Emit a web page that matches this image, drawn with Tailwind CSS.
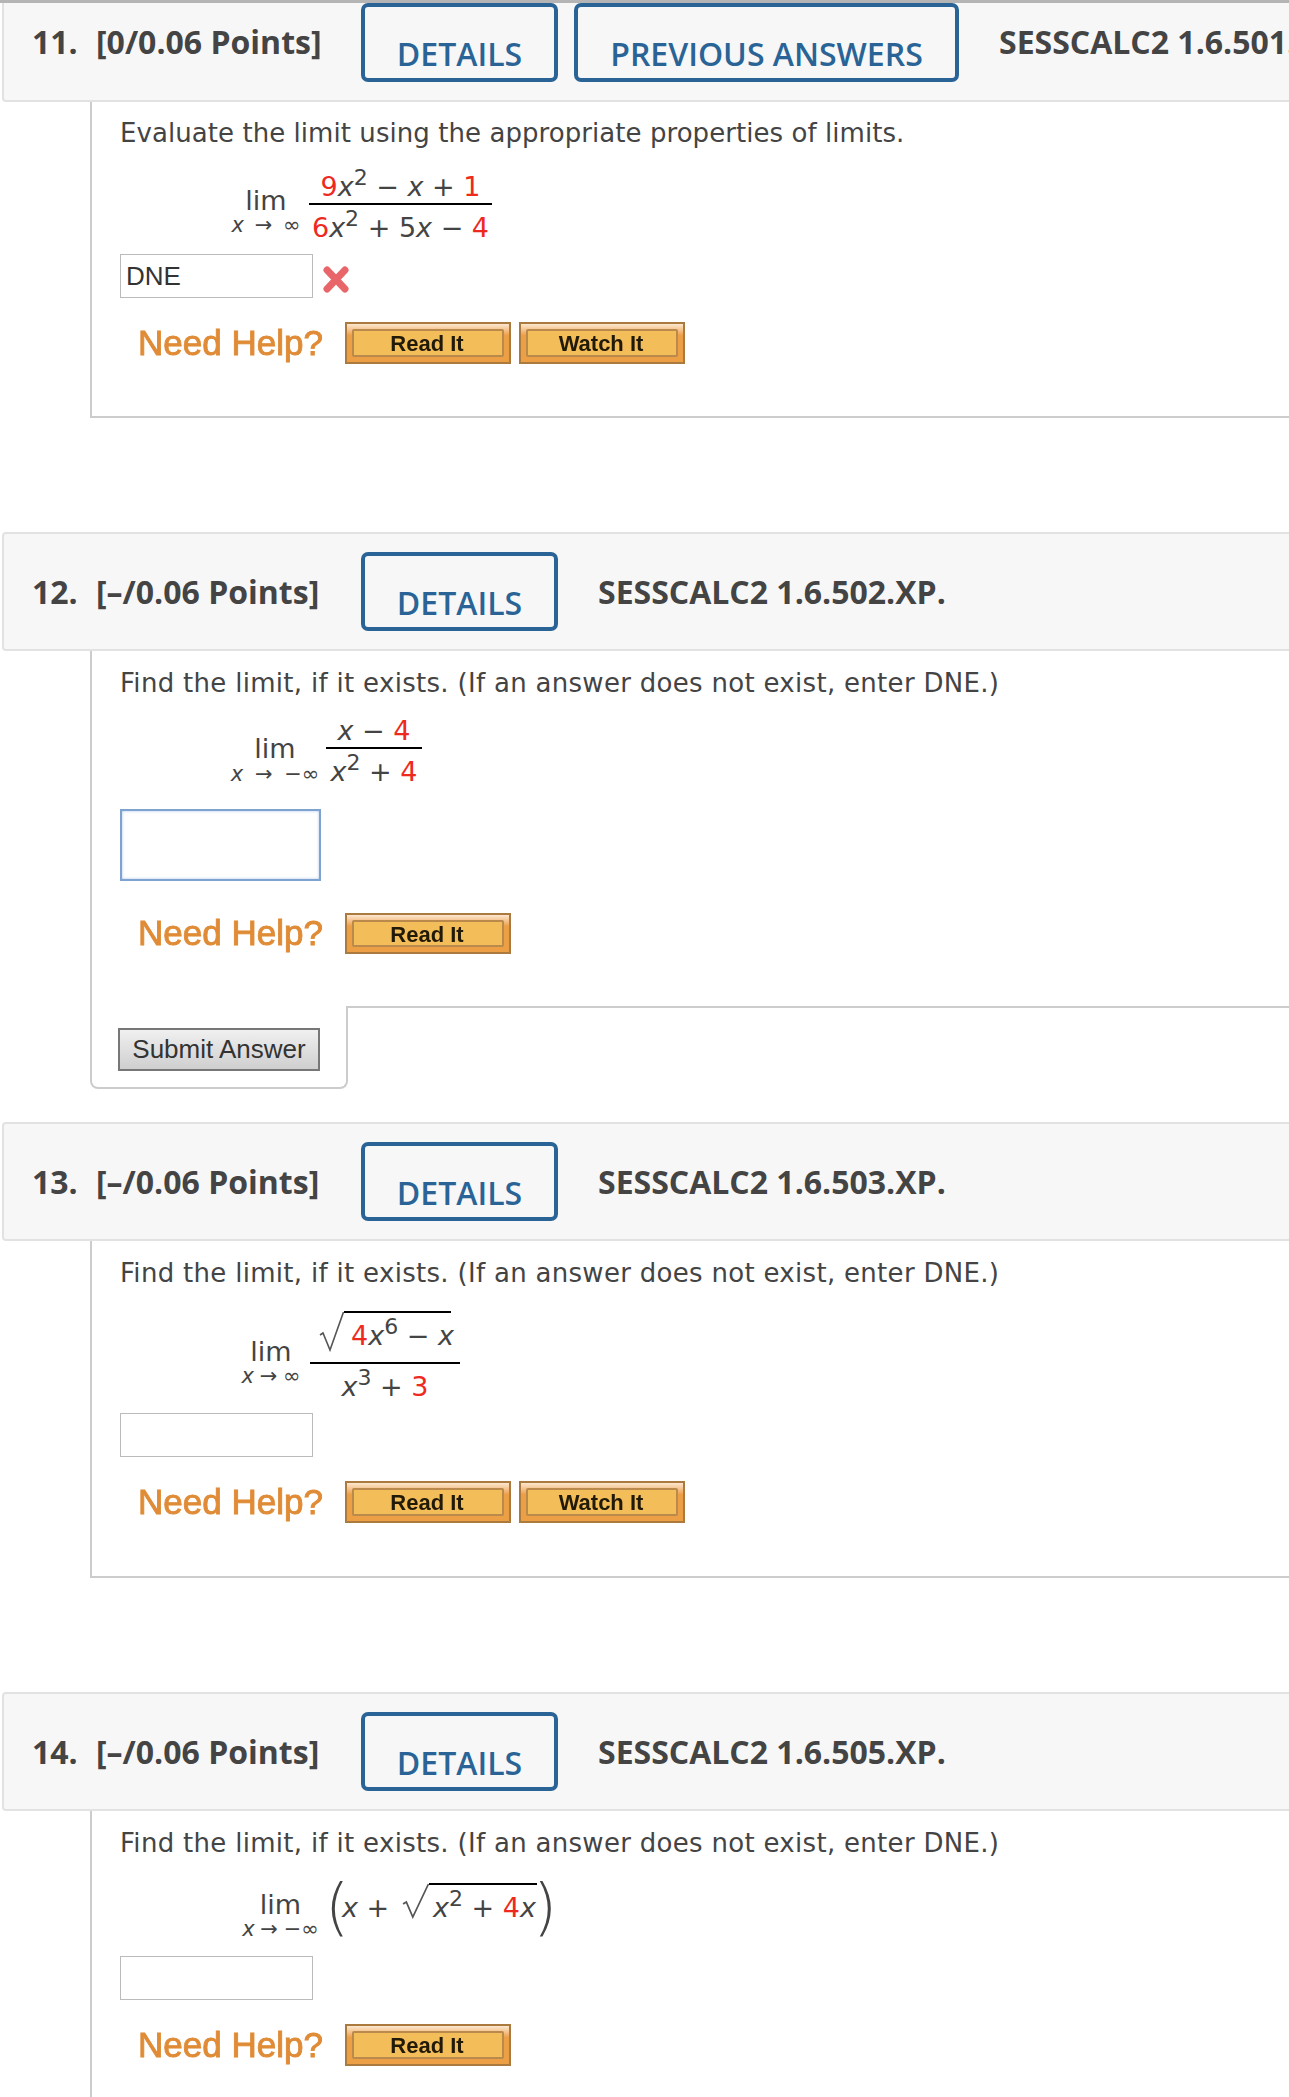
<!DOCTYPE html>
<html lang="en">
<head>
  <meta charset="UTF-8">
  <title>Limits homework</title>
  <script src="https://cdn.jsdelivr.net/npm/@tailwindcss/browser@4"></script>
</head>
<body class="bg-white overflow-hidden font-['DejaVu_Sans',sans-serif] text-[#444]">
<div class="w-[1289px] h-[2097px] overflow-hidden border-t-[3px] border-[#b5b5b5]">

  <!-- Question 11 -->
  <div class="h-[99px] ml-[2px] w-[1400px] border-2 border-t-0 border-[#e2e2e2] rounded-bl-[4px] bg-[#f7f7f7] flex items-center pb-[19px] font-['Open_Sans',sans-serif] font-bold text-[#444]">
    <span class="w-[64px] ml-[28px] text-[32px] leading-none">11.</span>
    <span class="w-[265px] text-[32px] leading-none whitespace-nowrap">[0/0.06 Points]</span>
    <span class="h-[79px] w-[197px] shrink-0 border-4 border-[#2a6496] rounded-[7px] flex justify-center pt-[27px] text-[32px] leading-[40px] font-semibold text-[#2a6496]">DETAILS</span>
    <span class="h-[79px] w-[385px] shrink-0 ml-[16px] border-4 border-[#2a6496] rounded-[7px] flex justify-center pt-[27px] text-[32px] leading-[40px] font-semibold text-[#2a6496]">PREVIOUS ANSWERS</span>
    <span class="ml-[40px] text-[32px] leading-none whitespace-nowrap">SESSCALC2 1.6.501.XP.</span>
  </div>
  <div class="h-[316px] ml-[90px] border-l-2 border-b-2 border-[#ccc] pl-[28px] pt-[15px]">
    <p class="text-[26px] tracking-[0.06px] leading-[32px] whitespace-nowrap">Evaluate the limit using the appropriate properties of limits.</p>
    <div class="flex items-start h-[87px] mt-[18px] ml-[111px] text-[27px]">
      <div class="w-[70px] mt-[22px] flex flex-col items-center">
        <span class="leading-[24px]">lim</span>
        <span class="text-[21px] leading-[24px] whitespace-nowrap [word-spacing:4px]"><i>x</i> → ∞</span>
      </div>
      <div class="w-[183px] ml-[8px] flex flex-col items-center whitespace-nowrap">
        <div class="w-full h-[38px] pt-[4px] text-center leading-[32px] border-b-2 border-black"><span class="text-[#ee2a1f]">9</span><i>x</i><sup class="text-[22px]">2</sup> − <i>x</i> + <span class="text-[#ee2a1f]">1</span></div>
        <div class="pt-[5px] leading-[36px]"><span class="text-[#ee2a1f]">6</span><i>x</i><sup class="text-[22px]">2</sup> + 5<i>x</i> − <span class="text-[#ee2a1f]">4</span></div>
      </div>
    </div>
    <div class="flex items-center">
      <div class="w-[193px] h-[44px] border border-[#bbb] pl-[5px] flex items-center font-['Liberation_Sans',sans-serif] text-[26px] text-[#333]">DNE</div>
      <svg class="ml-[9px] mt-[6px]" width="28" height="29" viewBox="0 0 28 29"><path d="M5 5 L23 24 M23 5 L5 24" stroke="#e8666a" stroke-width="7" stroke-linecap="round"/></svg>
    </div>
    <div class="flex items-center mt-[24px] ml-[18px] font-['Liberation_Sans',sans-serif]">
      <span class="w-[207px] pb-[2px] text-[35px] leading-none text-[#e08b36] [-webkit-text-stroke:0.9px_#e08b36] blur-[0.4px] whitespace-nowrap">Need Help?</span>
      <div class="w-[166px] h-[42px] border-2 border-[#ab7a3f] bg-gradient-to-b from-[#fbe7cf] to-[#ed9f45] to-30% p-[5px] flex">
        <div class="grow border-2 border-[#b98a4b] rounded-[2px] bg-[#f3bd5a] flex items-center justify-center pt-[1px] pr-[2px] text-[22px] font-bold text-[#221a08] blur-[0.4px]">Read It</div>
      </div>
      <div class="ml-[8px] w-[166px] h-[42px] border-2 border-[#ab7a3f] bg-gradient-to-b from-[#fbe7cf] to-[#ed9f45] to-30% p-[5px] flex">
        <div class="grow border-2 border-[#b98a4b] rounded-[2px] bg-[#f3bd5a] flex items-center justify-center pt-[1px] pr-[2px] text-[22px] font-bold text-[#221a08] blur-[0.4px]">Watch It</div>
      </div>
    </div>
  </div>

  <!-- Question 12 -->
  <div class="h-[119px] mt-[114px] ml-[2px] w-[1400px] border-2 border-[#e2e2e2] rounded-l-[4px] bg-[#f7f7f7] flex items-center font-['Open_Sans',sans-serif] font-bold">
    <span class="w-[64px] ml-[28px] text-[32px] leading-none">12.</span>
    <span class="w-[265px] text-[32px] leading-none whitespace-nowrap">[–/0.06 Points]</span>
    <span class="h-[79px] w-[197px] shrink-0 border-4 border-[#2a6496] rounded-[7px] flex justify-center pt-[27px] text-[32px] leading-[40px] font-semibold text-[#2a6496]">DETAILS</span>
    <span class="ml-[40px] text-[32px] leading-none whitespace-nowrap">SESSCALC2 1.6.502.XP.</span>
  </div>
  <div class="h-[438px] ml-[90px] flex flex-col">
    <div class="h-[355px] border-l-2 border-[#ccc] pl-[28px] pt-[16px]">
      <p class="text-[26px] tracking-[0.3px] leading-[32px] whitespace-nowrap">Find the limit, if it exists. (If an answer does not exist, enter DNE.)</p>
      <div class="flex items-start h-[98px] mt-[12px] ml-[111px] text-[27px]">
        <div class="w-[88px] mt-[26px] flex flex-col items-center">
          <span class="leading-[24px]">lim</span>
          <span class="text-[21px] leading-[26px] whitespace-nowrap [word-spacing:5px]"><i>x</i> → −∞</span>
        </div>
        <div class="w-[96px] ml-[7px] flex flex-col items-center whitespace-nowrap">
          <div class="w-full h-[38px] pt-[4px] text-center leading-[32px] border-b-2 border-black"><i>x</i> − <span class="text-[#ee2a1f]">4</span></div>
          <div class="pt-[5px] leading-[36px]"><i>x</i><sup class="text-[22px]">2</sup> + <span class="text-[#ee2a1f]">4</span></div>
        </div>
      </div>
      <div class="w-[201px] h-[72px] border-2 border-[#7fa3d1] shadow-[inset_0_0_3px_#a9c4e6]"></div>
      <div class="flex items-center mt-[32px] ml-[18px] font-['Liberation_Sans',sans-serif]">
        <span class="w-[207px] pb-[2px] text-[35px] leading-none text-[#e08b36] [-webkit-text-stroke:0.9px_#e08b36] blur-[0.4px] whitespace-nowrap">Need Help?</span>
        <div class="w-[166px] h-[41px] border-2 border-[#ab7a3f] bg-gradient-to-b from-[#fbe7cf] to-[#ed9f45] to-30% p-[5px] flex">
          <div class="grow border-2 border-[#b98a4b] rounded-[2px] bg-[#f3bd5a] flex items-center justify-center pt-[1px] pr-[2px] text-[22px] font-bold text-[#221a08] blur-[0.4px]">Read It</div>
        </div>
      </div>
    </div>
    <div class="flex h-[83px]">
      <div class="w-[258px] border-2 border-t-0 border-[#ccc] rounded-b-[8px] pt-[22px] pl-[26px]">
        <div class="w-[202px] h-[43px] border-2 border-[#777] bg-gradient-to-b from-[#f0f0f0] to-[#cfcfcf] flex items-center justify-center font-['Liberation_Sans',sans-serif] text-[26px] text-[#333]">Submit Answer</div>
      </div>
      <div class="grow border-t-2 border-[#ccc] ml-[-2px]"></div>
    </div>
  </div>

  <!-- Question 13 -->
  <div class="h-[119px] mt-[33px] ml-[2px] w-[1400px] border-2 border-[#e2e2e2] rounded-l-[4px] bg-[#f7f7f7] flex items-center font-['Open_Sans',sans-serif] font-bold">
    <span class="w-[64px] ml-[28px] text-[32px] leading-none">13.</span>
    <span class="w-[265px] text-[32px] leading-none whitespace-nowrap">[–/0.06 Points]</span>
    <span class="h-[79px] w-[197px] shrink-0 border-4 border-[#2a6496] rounded-[7px] flex justify-center pt-[27px] text-[32px] leading-[40px] font-semibold text-[#2a6496]">DETAILS</span>
    <span class="ml-[40px] text-[32px] leading-none whitespace-nowrap">SESSCALC2 1.6.503.XP.</span>
  </div>
  <div class="h-[337px] ml-[90px] border-l-2 border-b-2 border-[#ccc] pl-[28px] pt-[16px]">
    <p class="text-[26px] tracking-[0.3px] leading-[32px] whitespace-nowrap">Find the limit, if it exists. (If an answer does not exist, enter DNE.)</p>
    <div class="flex items-start h-[102px] mt-[22px] ml-[120px] text-[27px]">
      <div class="w-[62px] mt-[29px] flex flex-col items-center">
        <span class="leading-[24px]">lim</span>
        <span class="text-[21px] leading-[24px] whitespace-nowrap [word-spacing:-1px]"><i>x</i> → ∞</span>
      </div>
      <div class="w-[150px] ml-[8px] flex flex-col items-center whitespace-nowrap">
        <div class="w-full h-[53px] flex justify-center items-start border-b-2 border-black">
          <svg width="25" height="41" viewBox="0 0 25 41"><path d="M1 24 L4 22 L11 39 L24.5 1" fill="none" stroke="#555" stroke-width="1.6"/></svg>
          <div class="w-[107px] pl-[7px] pt-[3px] leading-[40px] border-t-2 border-black"><span class="text-[#ee2a1f]">4</span><i>x</i><sup class="text-[22px]">6</sup> − <i>x</i></div>
        </div>
        <div class="pt-[5px] leading-[36px]"><i>x</i><sup class="text-[22px]">3</sup> + <span class="text-[#ee2a1f]">3</span></div>
      </div>
    </div>
    <div class="w-[193px] h-[44px] border border-[#bbb]"></div>
    <div class="flex items-center mt-[24px] ml-[18px] font-['Liberation_Sans',sans-serif]">
      <span class="w-[207px] pb-[2px] text-[35px] leading-none text-[#e08b36] [-webkit-text-stroke:0.9px_#e08b36] blur-[0.4px] whitespace-nowrap">Need Help?</span>
      <div class="w-[166px] h-[42px] border-2 border-[#ab7a3f] bg-gradient-to-b from-[#fbe7cf] to-[#ed9f45] to-30% p-[5px] flex">
        <div class="grow border-2 border-[#b98a4b] rounded-[2px] bg-[#f3bd5a] flex items-center justify-center pt-[1px] pr-[2px] text-[22px] font-bold text-[#221a08] blur-[0.4px]">Read It</div>
      </div>
      <div class="ml-[8px] w-[166px] h-[42px] border-2 border-[#ab7a3f] bg-gradient-to-b from-[#fbe7cf] to-[#ed9f45] to-30% p-[5px] flex">
        <div class="grow border-2 border-[#b98a4b] rounded-[2px] bg-[#f3bd5a] flex items-center justify-center pt-[1px] pr-[2px] text-[22px] font-bold text-[#221a08] blur-[0.4px]">Watch It</div>
      </div>
    </div>
  </div>

  <!-- Question 14 -->
  <div class="h-[119px] mt-[114px] ml-[2px] w-[1400px] border-2 border-[#e2e2e2] rounded-l-[4px] bg-[#f7f7f7] flex items-center font-['Open_Sans',sans-serif] font-bold">
    <span class="w-[64px] ml-[28px] text-[32px] leading-none">14.</span>
    <span class="w-[265px] text-[32px] leading-none whitespace-nowrap">[–/0.06 Points]</span>
    <span class="h-[79px] w-[197px] shrink-0 border-4 border-[#2a6496] rounded-[7px] flex justify-center pt-[27px] text-[32px] leading-[40px] font-semibold text-[#2a6496]">DETAILS</span>
    <span class="ml-[40px] text-[32px] leading-none whitespace-nowrap">SESSCALC2 1.6.505.XP.</span>
  </div>
  <div class="h-[300px] ml-[90px] border-l-2 border-[#ccc] pl-[28px] pt-[16px]">
    <p class="text-[26px] tracking-[0.3px] leading-[32px] whitespace-nowrap">Find the limit, if it exists. (If an answer does not exist, enter DNE.)</p>
    <div class="flex items-start h-[81px] mt-[16px] ml-[121px] text-[27px] whitespace-nowrap">
      <div class="w-[79px] mt-[18px] flex flex-col items-center">
        <span class="leading-[24px]">lim</span>
        <span class="text-[21px] leading-[24px] [word-spacing:-1px]"><i>x</i> → −∞</span>
      </div>
      <span class="w-[19px] text-[62px] font-extralight leading-[62px] mt-[1px] ml-[5px] text-right">(</span>
      <span class="w-[60px] ml-[-2px] mt-[10px] leading-[46px]"><i>x</i> +</span>
      <svg class="mt-[8px]" width="27" height="36" viewBox="0 0 25 36" preserveAspectRatio="none"><path d="M1 21 L4 19 L10 34 L24.5 1" fill="none" stroke="#555" stroke-width="1.6"/></svg>
      <div class="w-[108px] mt-[8px] pl-[4px] leading-[46px] border-t-2 border-black"><i>x</i><sup class="text-[22px]">2</sup> + <span class="text-[#ee2a1f]">4</span><i>x</i></div>
      <span class="text-[62px] font-extralight leading-[62px] mt-[1px] ml-[-4px]">)</span>
    </div>
    <div class="w-[193px] h-[44px] border border-[#bbb]"></div>
    <div class="flex items-center mt-[24px] ml-[18px] font-['Liberation_Sans',sans-serif]">
      <span class="w-[207px] pb-[2px] text-[35px] leading-none text-[#e08b36] [-webkit-text-stroke:0.9px_#e08b36] blur-[0.4px] whitespace-nowrap">Need Help?</span>
      <div class="w-[166px] h-[42px] border-2 border-[#ab7a3f] bg-gradient-to-b from-[#fbe7cf] to-[#ed9f45] to-30% p-[5px] flex">
        <div class="grow border-2 border-[#b98a4b] rounded-[2px] bg-[#f3bd5a] flex items-center justify-center pt-[1px] pr-[2px] text-[22px] font-bold text-[#221a08] blur-[0.4px]">Read It</div>
      </div>
    </div>
  </div>
</div>
</body>
</html>
